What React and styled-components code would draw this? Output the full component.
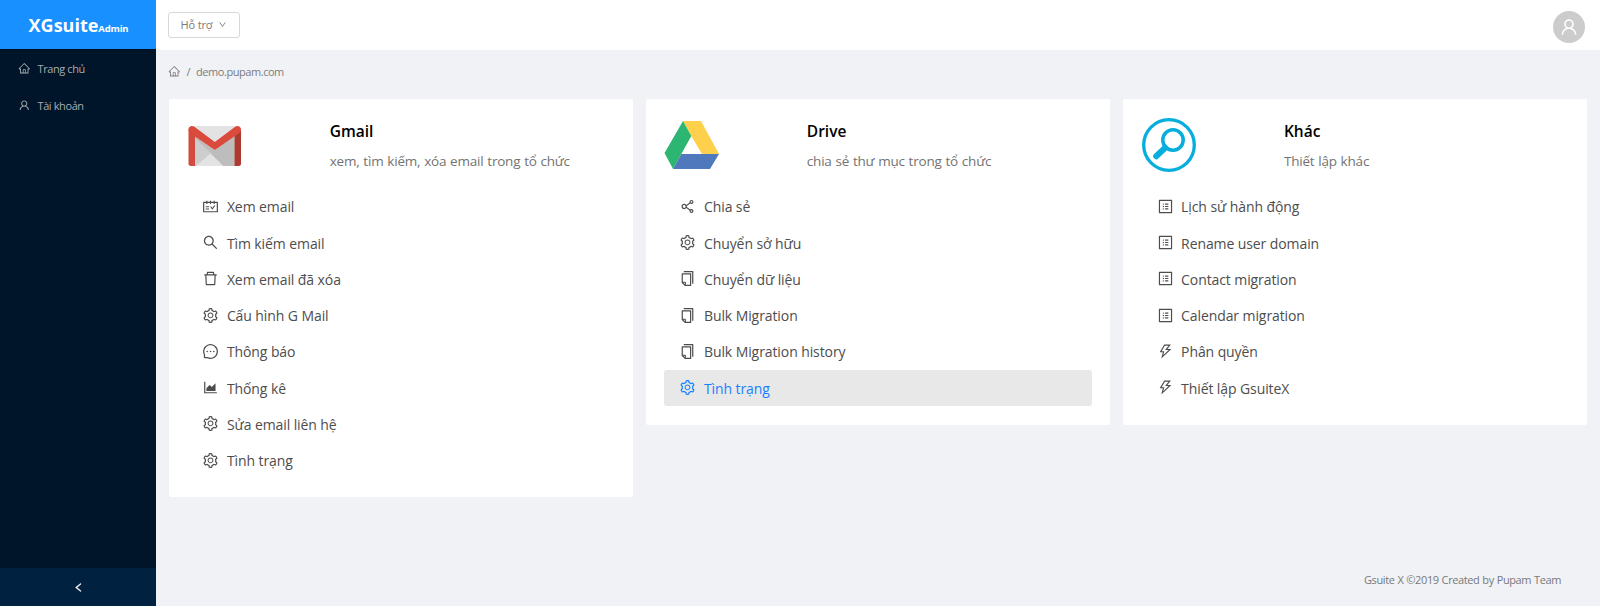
import React from "react";
import styled, { createGlobalStyle } from "styled-components";
import {
  AiOutlineHome, AiOutlineUser, AiOutlineDown, AiOutlineLeft, AiOutlineSchedule,
  AiOutlineSearch, AiOutlineDelete, AiOutlineSetting, AiOutlineMessage,
  AiOutlineAreaChart, AiOutlineShareAlt, AiOutlineCopy, AiOutlineProfile,
  AiOutlineThunderbolt,
} from "react-icons/ai";

const GlobalStyle = createGlobalStyle`
  * { box-sizing: border-box; }
  body {
    margin: 0;
    font-family: "Open Sans", "Noto Sans", sans-serif;
    color: #595959;
    background: #f0f2f5;
  }
  svg { display: block; flex: none; }
`;

const Layout = styled.div`
  display: flex;
  height: 606px;
`;

const Sidebar = styled.aside`
  width: 156px;
  flex: none;
  display: flex;
  flex-direction: column;
  background: #001529;
`;

const Brand = styled.div`
  height: 50px;
  display: flex;
  align-items: baseline;
  justify-content: center;
  padding-left: 1px;
  background: #1890ff;
  border-bottom: 1px solid #00101f;
  color: #fff;
  font-weight: 700;
  font-size: 18px;
  line-height: 51px;
  white-space: nowrap;
`;

const BrandSuffix = styled.span`
  font-size: 9.5px;
  letter-spacing: -0.2px;
`;

const Menu = styled.nav`
  flex: 1;
  display: flex;
  flex-direction: column;
  gap: 1px;
`;

const MenuItem = styled.a`
  height: 36px;
  display: flex;
  align-items: center;
  gap: 7px;
  padding: 1px 0 0 18px;
  color: #a6adb4;
  font-size: 11px;
  letter-spacing: -0.4px;
`;

const Collapse = styled.div`
  height: 38px;
  display: flex;
  align-items: center;
  justify-content: center;
  background: #002140;
  color: #fff;
`;

const Main = styled.div`
  flex: 1;
  min-width: 0;
  display: flex;
  flex-direction: column;
`;

const TopBar = styled.header`
  height: 50px;
  flex: none;
  display: flex;
  align-items: center;
  justify-content: space-between;
  padding: 0 15.5px 0 12px;
  background: #fff;
`;

const SupportButton = styled.button`
  width: 72px;
  height: 26px;
  display: flex;
  align-items: center;
  justify-content: center;
  gap: 6px;
  padding: 0 0 1px;
  border: 1px solid #d9d9d9;
  border-radius: 3px;
  background: #fff;
  color: #7a7a7a;
  font: 11px "Open Sans", "Noto Sans", sans-serif;
  letter-spacing: -0.15px;
`;

const Avatar = styled.div`
  width: 32px;
  height: 32px;
  margin-top: 4px;
  display: flex;
  align-items: center;
  justify-content: center;
  border-radius: 50%;
  background: #ccc;
  color: #fff;
`;

const Breadcrumb = styled.div`
  height: 49px;
  flex: none;
  display: flex;
  align-items: center;
  gap: 6px;
  padding: 0 0 7px 12px;
  color: #7b7c7f;
  font-size: 11px;
  letter-spacing: -0.45px;
`;

const Cards = styled.div`
  flex: 1;
  display: grid;
  grid-template-columns: repeat(3, 1fr);
  align-items: start;
  gap: 12.5px;
  padding: 0 12.5px 0 12.7px;
`;

const CardBox = styled.section`
  padding: 19px 18.5px 18.5px;
  background: #fff;
  border-radius: 2px;
`;

const CardHead = styled.div`
  height: 70.75px;
  display: grid;
  grid-template-columns: 1fr 2fr;
`;

const CardTitle = styled.h2`
  margin: 0 0 6px;
  padding-top: 1px;
  color: #000;
  font-size: 15.5px;
  font-weight: 550;
  line-height: 25px;
`;

const CardText = styled.p`
  margin: 0;
  color: #737373;
  font-size: 13.5px;
  line-height: 23px;
  letter-spacing: -0.2px;
  word-spacing: 0.5px;
  white-space: nowrap;
`;

const Row = styled.a`
  height: 36.25px;
  display: flex;
  align-items: center;
  gap: 7.5px;
  padding: 0 0 1px 15.2px;
  border-radius: 3px;
  font-size: 14px;
  letter-spacing: -0.09px;
  white-space: nowrap;
  background: ${(p) => (p.$active ? "#e8e8e8" : "transparent")};
  color: ${(p) => (p.$active ? "#1880ff" : "#4d4d4d")};
`;

const RowLabel = styled.span`
  padding-top: 1px;
`;

const Footer = styled.footer`
  height: 52px;
  flex: none;
  padding-right: 39px;
  text-align: right;
  color: #78797c;
  font-size: 11px;
  line-height: 51px;
  letter-spacing: -0.4px;
  word-spacing: 0.5px;
`;

const GmailLogo = () => (
  <svg width="54" height="54" viewBox="-0.5 0 54 54">
    <path d="M4 8h46v40H4z" fill="#e3e3e3" />
    <path d="M7 18l16.500 17L8 48H7z" fill="#cfcfcf" />
    <path d="M7 18l20 14 20-14v30H36L7 20z" fill="#bdbdbd" />
    <path d="M7 20l16.500 15L8 48H7z" fill="#cdcdcd" />
    <path d="M1 11v34.500A2.500 2.500 0 0 0 3.500 48H7.500V18z" fill="#d34b3e" />
    <path d="M53.500 11v34.500A2.500 2.500 0 0 1 51 48H47V17z" fill="#ad3a31" />
    <path d="M1 11.500C1 8.500 4 7 6.500 8.500L27.300 24 48 8.500C50.500 7 53.500 8.500 53.500 11.500c0 1.500-.5 2.700-2 3.800L27.300 32 3 15.500C1.500 14.400 1 13 1 11.500z" fill="#da4a3d" />
  </svg>
);

const DriveLogo = () => (
  <svg width="56" height="54" viewBox="0 0 56 54">
    <path d="M19 3h18l18 33H38L27.300 18z" fill="#ffd04b" />
    <path d="M19 3l8.300 15L9 51 .5 35z" fill="#2db672" />
    <path d="M17.300 36H55l-9 15H9z" fill="#5079bd" />
  </svg>
);

const SearchLogo = () => (
  <svg width="55" height="54" viewBox="-1 0 55 54" fill="none" stroke="#06aedd">
    <circle cx="27" cy="27" r="25.300" strokeWidth="3.300" />
    <circle cx="31" cy="22" r="10.200" strokeWidth="3.500" />
    <path d="M14.200 38.200l9-8.400" strokeWidth="6" strokeLinecap="round" />
  </svg>
);

const cards = [
  {
    title: "Gmail", text: "xem, tìm kiếm, xóa email trong tổ chức", Logo: GmailLogo,
    rows: [
      [AiOutlineSchedule, "Xem email"],
      [AiOutlineSearch, "Tìm kiếm email"],
      [AiOutlineDelete, "Xem email đã xóa"],
      [AiOutlineSetting, "Cấu hình G Mail"],
      [AiOutlineMessage, "Thông báo"],
      [AiOutlineAreaChart, "Thống kê"],
      [AiOutlineSetting, "Sửa email liên hệ"],
      [AiOutlineSetting, "Tình trạng"],
    ],
  },
  {
    title: "Drive", text: "chia sẻ thư mục trong tổ chức", Logo: DriveLogo,
    rows: [
      [AiOutlineShareAlt, "Chia sẻ"],
      [AiOutlineSetting, "Chuyển sở hữu"],
      [AiOutlineCopy, "Chuyển dữ liệu"],
      [AiOutlineCopy, "Bulk Migration"],
      [AiOutlineCopy, "Bulk Migration history"],
      [AiOutlineSetting, "Tình trạng", true],
    ],
  },
  {
    title: "Khác", text: "Thiết lập khác", Logo: SearchLogo,
    rows: [
      [AiOutlineProfile, "Lịch sử hành động"],
      [AiOutlineProfile, "Rename user domain"],
      [AiOutlineProfile, "Contact migration"],
      [AiOutlineProfile, "Calendar migration"],
      [AiOutlineThunderbolt, "Phân quyền"],
      [AiOutlineThunderbolt, "Thiết lập GsuiteX"],
    ],
  },
];

function Card({ title, text, Logo, rows }) {
  return (
    <CardBox>
      <CardHead>
        <Logo />
        <div>
          <CardTitle>{title}</CardTitle>
          <CardText>{text}</CardText>
        </div>
      </CardHead>
      {rows.map(([Icon, label, active]) => (
        <Row key={label} $active={active}>
          <Icon size={17} />
          <RowLabel>{label}</RowLabel>
        </Row>
      ))}
    </CardBox>
  );
}

export default function App() {
  return (
    <>
      <GlobalStyle />
      <Layout>
        <Sidebar>
          <Brand>XGsuite<BrandSuffix>Admin</BrandSuffix></Brand>
          <Menu>
            <MenuItem><AiOutlineHome size={12.5} />Trang chủ</MenuItem>
            <MenuItem><AiOutlineUser size={12.5} />Tài khoản</MenuItem>
          </Menu>
          <Collapse><AiOutlineLeft size={11} strokeWidth={50} /></Collapse>
        </Sidebar>
        <Main>
          <TopBar>
            <SupportButton>Hỗ trợ<AiOutlineDown size={9} /></SupportButton>
            <Avatar><AiOutlineUser size={20} /></Avatar>
          </TopBar>
          <Breadcrumb>
            <AiOutlineHome size={12.5} />
            <span>/</span>
            <span>demo.pupam.com</span>
          </Breadcrumb>
          <Cards>
            {cards.map((card) => <Card key={card.title} {...card} />)}
          </Cards>
          <Footer>Gsuite X ©2019 Created by Pupam Team</Footer>
        </Main>
      </Layout>
    </>
  );
}
